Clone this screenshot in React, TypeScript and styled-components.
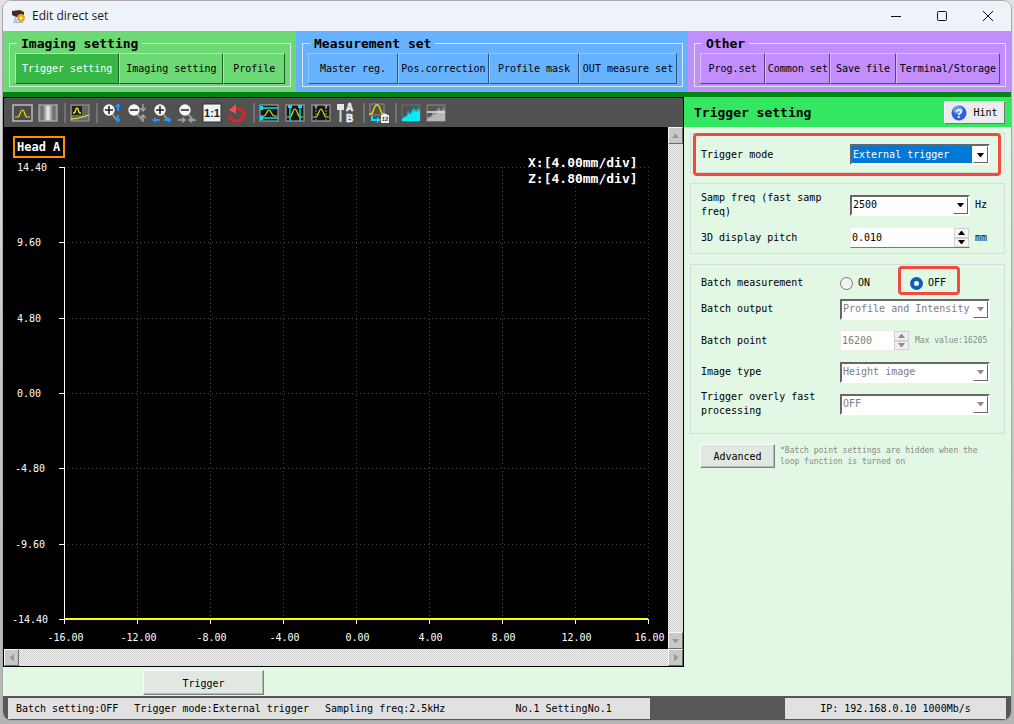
import React from "react";
import styled, { createGlobalStyle, css } from "styled-components";

const MONO = '"DejaVu Sans Mono", "Liberation Mono", monospace';

const GlobalStyle = createGlobalStyle`
  *, *::before, *::after { box-sizing: border-box; }
  body { margin: 0; background: #bdbdbd; font-family: ${MONO}; font-size: 10px; line-height: 14px; color: #000; }
  button, input, select { font: inherit; color: inherit; margin: 0; }
  h1, h2, p { margin: 0; }
`;

const Page = styled.div`
  min-height: 100vh;
  padding: 1px 3px 4px;
  display: flex;
  flex-direction: column;
  background: linear-gradient(#e2e2e4, #c9c9cb 50%, #b4b4b4);
`;

const Window = styled.div`
  flex: 1;
  display: flex;
  flex-direction: column;
  border-radius: 8px;
  overflow: hidden;
  background: #e2f7e4;
  box-shadow: 0 0 0 1px #a9a9ab;
`;

/* ---------- title bar ---------- */
const TitleBar = styled.header`
  display: flex;
  align-items: center;
  height: 30px;
  padding-left: 8px;
  gap: 6px;
  background: #eef3fa;
`;
const WindowTitle = styled.h1`
  flex: 1;
  font: 400 12px/16px "Open Sans", "Noto Sans", sans-serif;
  color: #1a1a1a;
`;
const CaptionButtons = styled.div`
  display: flex;
`;
const CaptionButton = styled.button`
  width: 46px;
  height: 30px;
  padding: 0;
  border: 0;
  background: none;
  display: grid;
  place-items: center;
`;

/* ---------- ribbon ---------- */
type Tone = "green" | "blue" | "purple";
const tones = {
  green: { bg: "#6cd975", light: "#a0f0a5", dark: "#1f5c27" },
  blue: { bg: "#66b2ff", light: "#92c9ff", dark: "#30557d" },
  purple: { bg: "#c28dfd", light: "#dab7ff", dark: "#5d437a" },
};
const Ribbon = styled.nav`
  display: grid;
  grid-template-columns: 293fr 392fr 323fr;
  border-bottom: 5px solid #048314;
`;
const RibbonSection = styled.div<{ $tone: Tone }>`
  padding: 5px 5px 5px 6px;
  background: ${(p) => tones[p.$tone].bg};
`;
const RibbonGroup = styled.fieldset`
  margin: 0;
  min-width: 0;
  padding: 2px 5px;
  border: 1px solid #d9e4ec;
`;
const RibbonLegend = styled.legend`
  margin-left: 2px;
  padding: 0 4px;
  font-size: 13px;
  line-height: 15px;
  font-weight: 700;
`;
const RibbonButtons = styled.div<{ $cols: string }>`
  display: grid;
  grid-template-columns: ${(p) => p.$cols};
`;
const RibbonButton = styled.button<{ $tone: Tone; $active?: boolean }>`
  height: 31px;
  padding: 1px 0 0;
  white-space: nowrap;
  background: ${(p) => (p.$active ? "#36b746" : "transparent")};
  color: ${(p) => (p.$active ? "#fff" : "#000")};
  border: 1px solid;
  border-color: ${(p) => {
    const t = tones[p.$tone];
    return `${t.light} ${t.dark} ${t.dark} ${t.light}`;
  }};
`;

/* ---------- main area ---------- */
const Main = styled.main`
  flex: 1;
  display: grid;
  grid-template-columns: minmax(0, 1fr) 327px;
`;
const LeftColumn = styled.section`
  display: flex;
  flex-direction: column;
`;
const PlotPanel = styled.div`
  border: 1px solid #000;
  background: #000;
`;
const Toolbar = styled.div`
  display: flex;
  align-items: center;
  height: 29px;
  padding-left: 4px;
  background: #515151;
`;
const ToolGroup = styled.div<{ $gap: number }>`
  display: flex;
  gap: ${(p) => p.$gap}px;
  padding: 0 6px 0 4px;
  border-right: 2px solid #727272;
  &:last-child { border-right: 0; }
`;
const ToolButton = styled.button`
  width: 20px;
  height: 20px;
  padding: 0;
  border: 0;
  background: none;
  svg { display: block; overflow: visible; }
`;
const PlotRow = styled.div`
  display: grid;
  grid-template-columns: minmax(0, 1fr) 15px;
`;
const PlotArea = styled.div`
  position: relative;
  svg { display: block; width: 100%; height: auto; }
`;
const HeadTag = styled.div`
  position: absolute;
  top: 9px;
  left: 9px;
  padding: 2px 3px 2px 2px;
  border: 2px solid #ff8c0a;
  color: #fff;
  font-size: 12px;
  line-height: 14px;
  font-weight: 700;
`;
const ScrollTrack = styled.div<{ $dir: "row" | "column" }>`
  display: flex;
  flex-direction: ${(p) => p.$dir};
  justify-content: space-between;
  background: repeating-conic-gradient(#cbcbcb 0 25%, #f4f4f4 0 50%) 0 0 / 2px 2px;
`;
const ScrollButton = styled.button`
  width: 15px;
  height: 17px;
  padding: 0;
  display: grid;
  place-items: center;
  background: #c8c8c8;
  border: 1px solid;
  border-color: #f6f6f6 #6c6c6c #6c6c6c #f6f6f6;
`;
const TriggerBar = styled.div`
  flex: 1;
  padding: 3px 0 1px 140px;
`;
const RaisedButton = styled.button<{ $width: number; $height: number }>`
  display: block;
  width: ${(p) => p.$width}px;
  height: ${(p) => p.$height}px;
  padding: 2px 0 0;
  flex: none;
  background: #e1e8e1;
  border: 1px solid;
  border-color: #fafffa #7c837c #7c837c #fafffa;
  box-shadow: inset -1px -1px #b4bbb4;
`;

/* ---------- settings ---------- */
const Settings = styled.aside`
  background: #e2f7e4;
`;
const SettingsHeader = styled.div`
  display: flex;
  align-items: center;
  justify-content: space-between;
  height: 30px;
  padding: 1px 6px 0 10px;
  background: #34e761;
`;
const SettingsTitle = styled.h2`
  font-size: 13px;
  line-height: 16px;
`;
const HintButton = styled.button`
  display: flex;
  align-items: center;
  justify-content: center;
  gap: 6px;
  width: 61px;
  height: 23px;
  padding: 0;
  background: #ececec;
  border: 1px solid;
  border-color: #fff #777 #777 #fff;
`;
const Groups = styled.div`
  display: flex;
  flex-direction: column;
  gap: 10px;
  padding: 6px 6px 10px;
`;
const GroupBox = styled.div<{ $top: number; $bottom: number; $gap?: number }>`
  position: relative;
  display: flex;
  flex-direction: column;
  gap: ${(p) => p.$gap ?? 0}px;
  padding: ${(p) => p.$top}px 14px ${(p) => p.$bottom}px 10px;
  border: 1px solid #d8dcda;
`;
const Marker = styled.div<{ $inset: string }>`
  position: absolute;
  inset: ${(p) => p.$inset};
  border: 3px solid #f04b3e;
  border-radius: 4px;
  pointer-events: none;
`;
const Row = styled.div<{ $label: number; $height: number }>`
  display: grid;
  grid-template-columns: ${(p) => p.$label}px minmax(0, 1fr);
  align-items: center;
  min-height: ${(p) => p.$height}px;
`;
const Controls = styled.div`
  display: flex;
  align-items: center;
  gap: 5px;
`;
const Combo = styled.div<{ $width: string }>`
  position: relative;
  width: ${(p) => p.$width};
  height: 21px;
  border: 2px solid;
  border-color: #666 #fff #fff #666;
  background: #fff;
`;
const ComboSelect = styled.select<{ $highlight?: boolean }>`
  appearance: none;
  display: block;
  width: 100%;
  height: 17px;
  padding: 0 16px 0 1px;
  border: 0;
  border-radius: 0;
  outline: 0;
  background: transparent;
  &:disabled { color: #7d7d7d; opacity: 1; }
  ${(p) =>
    p.$highlight &&
    css`
      color: #fff;
      background: linear-gradient(#0078d7, #0078d7) no-repeat 0 0 / calc(100% - 16px) 100%;
    `}
`;
const ComboArrow = styled.span<{ $off?: boolean }>`
  position: absolute;
  top: 0;
  right: 0;
  width: 15px;
  height: 17px;
  display: grid;
  place-items: center;
  border: 1px solid;
  border-color: #fff #666 #666 #fff;
  color: ${(p) => (p.$off ? "#8d8d8d" : "#000")};
  pointer-events: none;
`;
const Spin = styled.div<{ $width: number; $off?: boolean }>`
  display: flex;
  width: ${(p) => p.$width}px;
  height: 21px;
  border: 1px solid;
  border-color: #ededed #ededed ${(p) => (p.$off ? "#ededed" : "#7a7a7a")} #ededed;
  background: #fff;
`;
const SpinInput = styled.input`
  flex: 1;
  min-width: 0;
  padding: 0 1px;
  border: 0;
  outline: 0;
  background: transparent;
  appearance: textfield;
  &::-webkit-inner-spin-button { appearance: none; margin: 0; }
  &:disabled { color: #7d7d7d; }
`;
const SpinButtons = styled.div`
  display: grid;
  grid-template-rows: 1fr 1fr;
  width: 15px;
  background: #ececec;
`;
const SpinButton = styled.button`
  padding: 0;
  border: 1px solid #d2d2d2;
  background: #f6f6f6;
  display: grid;
  place-items: center;
  &:disabled { color: #8d8d8d; background: #efefef; }
`;
const RadioLabel = styled.label`
  position: relative;
  display: flex;
  align-items: center;
  gap: 5px;
  width: 65px;
`;
const Radio = styled.input`
  appearance: none;
  width: 13px;
  height: 13px;
  border: 1px solid #777;
  border-radius: 50%;
  background: #f3f3f3;
  &:checked { border: 4px solid #0a5fb6; background: #fff; }
`;
const SmallText = styled.span`
  max-width: 210px;
  font-size: 8px;
  line-height: 11px;
  color: #868a86;
`;
const LimitText = styled(SmallText)`
  white-space: nowrap;
`;
const AdvancedRow = styled.div`
  display: flex;
  align-items: center;
  gap: 5px;
  padding-left: 10px;
`;

/* ---------- status bar ---------- */
const StatusBar = styled.footer`
  display: grid;
  grid-template-columns: 642fr 135fr 221fr;
  height: 24px;
  padding: 2px 5px 1px;
  background: #575757;
`;
const StatusCell = styled.div<{ $last?: boolean }>`
  display: flex;
  align-items: center;
  gap: 16px;
  padding: 1px 0 0 8px;
  white-space: pre;
  background: #e1e1e1;
  ${(p) => p.$last && "grid-column: 3; justify-content: center; padding: 1px 0 0;"}
`;
const ProgramName = styled.span`
  margin-left: 54px;
`;

/* ---------- icons ---------- */
const Triangle = ({ d, w = 7, h = 4, fill = "currentColor" }: { d: string; w?: number; h?: number; fill?: string }) => (
  <svg width={w} height={h} viewBox={`0 0 ${w} ${h}`}>
    <path d={d} fill={fill} />
  </svg>
);
const DOWN = "M0 0h7L4 4H3z";
const UP = "M0 4h7L4 0H3z";

const Icon = ({ children }: { children: React.ReactNode }) => (
  <svg width="20" height="20" viewBox="0 0 20 20" fill="none">
    {children}
  </svg>
);
const Frame = () => <rect x="1" y="2" width="18" height="16" fill="#161616" stroke="#9c9c9c" strokeWidth="1.2" />;
const Lens = ({ x, plus }: { x: number; plus?: boolean }) => (
  <>
    <path d={`M${x + 3} 11l6 7`} stroke="#8e8e8e" strokeWidth="2" />
    <circle cx={x} cy="7" r="5.700" fill="#f7f7f7" />
    <path d={`M${x - 4} 7h8${plus ? `M${x} 3v8` : ""}`} stroke="#222" strokeWidth="1.6" />
  </>
);
const Bars = ({ color }: { color: string }) => (
  <path
    d="M1 18V15L2 16L3 13L4 15L5 12L6 14L7 7L8 12L9 9L10 12L11 5L12 10L13 3L14 9L15 6L16 10L17 3L18 9L19 6V18z"
    fill={color}
  />
);

const icons: Record<string, React.ReactNode> = {
  "Profile view": (
    <Icon>
      <rect x="1" y="2" width="19" height="16" fill="#4a4a4a" stroke="#b4b4b4" strokeWidth="1.6" />
      <path d="M3 14h3c2 0 2-7 4.500-7s2 7 4.500 7h3" stroke="#e8e000" strokeWidth="1.2" />
    </Icon>
  ),
  "Intensity view": (
    <Icon>
      <defs>
        <linearGradient id="grey">
          <stop stopColor="#8c8c8c" />
          <stop offset=".2" stopColor="#6a6a6a" />
          <stop offset=".5" stopColor="#f0f0f0" />
          <stop offset=".8" stopColor="#6a6a6a" />
          <stop offset="1" stopColor="#8c8c8c" />
        </linearGradient>
      </defs>
      <rect x="1" y="2" width="18" height="16" fill="url(#grey)" stroke="#a5a5a5" strokeWidth="1.4" />
    </Icon>
  ),
  "Combined view": (
    <Icon>
      <rect x="1" y="2" width="18" height="16" fill="#666" stroke="#9a9a9a" />
      <rect x="2" y="3" width="10" height="9" fill="#222" />
      <path d="M3 10h1c2 0 1-5 3-5s1 5 3 5h1M1 16c6 0 9-1 18-4" stroke="#f2ea00" strokeWidth="1.3" />
    </Icon>
  ),
  "Zoom in vertically": (
    <Icon>
      <Lens x={7} plus />
      <path d="M16 4v4M16 12v5" stroke="#1e96ff" strokeWidth="2" />
      <path d="M16 0l3 4h-6zM16 20l3-4h-6z" fill="#1e96ff" />
    </Icon>
  ),
  "Zoom out vertically": (
    <Icon>
      <Lens x={7} />
      <path d="M16 1v6M16 12v7M13.500 5l2.500 3 2.500-3M13.500 15l2.500-3 2.500 3" stroke="#a5a5a5" strokeWidth="1.400" />
    </Icon>
  ),
  "Zoom in horizontally": (
    <Icon>
      <Lens x={8} plus />
      <path d="M3 17h5M12 17h5" stroke="#1e96ff" strokeWidth="2" />
      <path d="M0 17l4-3v6zM20 17l-4-3v6z" fill="#1e96ff" />
    </Icon>
  ),
  "Zoom out horizontally": (
    <Icon>
      <Lens x={8} />
      <path d="M1 17h7M12 17h7M5 14.500l3 2.500-3 2.500M15 14.500l-3 2.500 3 2.500" stroke="#a5a5a5" strokeWidth="1.400" />
    </Icon>
  ),
  "Actual size": (
    <Icon>
      <rect x="1" y="1" width="18" height="18" fill="#eef3f9" stroke="#333" />
      <text x="10" y="14" textAnchor="middle" fontFamily="Liberation Sans, sans-serif" fontWeight="700" fontSize="11" fill="#222">
        1:1
      </text>
    </Icon>
  ),
  Reset: (
    <Icon>
      <path d="M9 6c5-1 8 2 8 5.500S14 18 10 18s-7-2-7.500-6" stroke="#dc2424" strokeWidth="3" />
      <path d="M9 1v10L2 7z" fill="#f25050" />
    </Icon>
  ),
  "Height range": (
    <Icon>
      <Frame />
      <path d="M2 13h3c2 0 3-6 5-6s3 6 5 6h3" stroke="#e8e000" strokeWidth="1.2" />
      <path d="M1 5h18M1 15h18" stroke="#00e5f5" strokeWidth="1.4" />
      <path d="M1 3h3v4H1zM1 13h3v4H1z" fill="#00e5f5" />
    </Icon>
  ),
  "Width range": (
    <Icon>
      <Frame />
      <path d="M2 14h3c2 0 3-8 5-8s3 8 5 8h3" stroke="#e8e000" strokeWidth="1.2" />
      <path d="M5 2v16M15 2v16" stroke="#00e5f5" strokeWidth="1.4" />
      <path d="M3 2h4v3H3zM13 2h4v3h-4z" fill="#00e5f5" />
    </Icon>
  ),
  "Mask range": (
    <Icon>
      <Frame />
      <path d="M2 14h3c2 0 3-8 5-8s3 8 5 8h3" stroke="#e8e000" strokeWidth="1.2" />
      <path d="M5 4v14M15 4v14" stroke="#999" strokeDasharray="2 1" />
      <path d="M3 2h4L5 6zM13 2h4l-2 4z" fill="#999" />
    </Icon>
  ),
  "Head A and B": (
    <Icon>
      <path d="M0 1h7v6H0z" fill="#e6e6e6" />
      <path d="M3.500 7v12" stroke="#d8d8d8" strokeWidth="2" />
      <g fontFamily="Liberation Sans, sans-serif" fontWeight="700" fontSize="10" fill="#f2f2f2" stroke="#f2f2f2" strokeWidth=".4">
        <text x="9" y="8">A</text>
        <text x="9" y="19">B</text>
      </g>
    </Icon>
  ),
  "Output position": (
    <Icon>
      <rect x="1" y="1" width="14" height="11" stroke="#8e8e8e" />
      <path d="M0 11h2c3 0 2-9 6-9s3 9 6 9h2" stroke="#f0d800" strokeWidth="1.4" />
      <path d="M3 13v4h6" stroke="#00e0ff" strokeWidth="2" />
      <path d="M8 14l4 3-4 3z" fill="#00e0ff" />
      <path d="M12 12h2v-1h4v1h2v8h-8z" fill="#f2f2f2" />
      <text x="16" y="18" textAnchor="middle" fontFamily="Liberation Sans, sans-serif" fontWeight="700" fontSize="6" fill="#333">
        12
      </text>
    </Icon>
  ),
  Histogram: (
    <Icon>
      <rect x="1" y="2" width="18" height="16" stroke="#707070" />
      <Bars color="#00f0ff" />
    </Icon>
  ),
  "Histogram level": (
    <Icon>
      <rect x="1" y="2" width="18" height="16" fill="#565656" stroke="#8a8a8a" />
      <Bars color="#b8b8b8" />
      <path d="M1 9h18" stroke="#e2e2e2" strokeWidth="1.400" />
    </Icon>
  ),
};

const toolGroups: { gap: number; items: string[] }[] = [
  { gap: 6, items: ["Profile view", "Intensity view"] },
  { gap: 6, items: ["Combined view"] },
  {
    gap: 5,
    items: ["Zoom in vertically", "Zoom out vertically", "Zoom in horizontally", "Zoom out horizontally", "Actual size", "Reset"],
  },
  { gap: 6, items: ["Height range", "Width range", "Mask range", "Head A and B"] },
  { gap: 6, items: ["Output position"] },
  { gap: 5, items: ["Histogram", "Histogram level"] },
];

const ribbon: { tone: Tone; title: string; cols: string; items: string[] }[] = [
  { tone: "green", title: "Imaging setting", cols: "105fr 105fr 62fr", items: ["Trigger setting", "Imaging setting", "Profile"] },
  {
    tone: "blue",
    title: "Measurement set",
    cols: "90fr 91fr 90fr 98fr",
    items: ["Master reg.", "Pos.correction", "Profile mask", "OUT measure set"],
  },
  {
    tone: "purple",
    title: "Other",
    cols: "65fr 65fr 65fr 104fr",
    items: ["Prog.set", "Common set", "Save file", "Terminal/Storage"],
  },
];

/* ---------- chart ---------- */
const yTicks = ["14.40", "9.60", "4.80", "0.00", "-4.80", "-9.60", "-14.40"];
const xTicks = ["-16.00", "-12.00", "-8.00", "-4.00", "0.00", "4.00", "8.00", "12.00", "16.00"];
const yPos = (i: number) => Math.round(40 + (i * 452) / 6) + 0.5;
const xPos = (i: number) => 60 + i * 73 + 0.5;
const yLabelX = (t: string) => (t.length > 5 ? 8 : t.startsWith("-") ? 11 : 13);

const Chart = () => (
  <svg viewBox="0 0 664 522" role="img" aria-label="Profile chart" fontFamily={MONO} fontSize="10" fill="#fff">
    <g stroke="#484848" strokeDasharray="1 3">
      {yTicks.slice(0, -1).map((t, i) => (
        <path key={t} d={`M60 ${yPos(i)}H644`} />
      ))}
      {xTicks.slice(1).map((t, i) => (
        <path key={t} d={`M${xPos(i + 1)} 40V492`} />
      ))}
    </g>
    <g stroke="#fff">
      <path d="M60.500 40V497M55 492.500H645" />
      {yTicks.map((t, i) => (
        <path key={t} d={`M55 ${yPos(i)}h5`} />
      ))}
      {xTicks.map((t, i) => (
        <path key={t} d={`M${xPos(i)} 492v5`} />
      ))}
    </g>
    <path d="M61 492H644" stroke="#ffff00" strokeWidth="2" />
    {yTicks.map((t, i) => (
      <text key={t} x={yLabelX(t)} y={yPos(i) + 3.5}>
        {t}
      </text>
    ))}
    {xTicks.map((t, i) => (
      <text key={t} x={xPos(i) + 1} y="514" textAnchor="middle">
        {t}
      </text>
    ))}
    <g fontSize="13" fontWeight="700">
      <text x="524" y="40">X:[4.00mm/div]</text>
      <text x="524" y="56">Z:[4.80mm/div]</text>
    </g>
  </svg>
);

type ComboProps = { id: string; width: string; value: string; disabled?: boolean; highlight?: boolean };
const ComboBox = ({ id, width, value, disabled, highlight }: ComboProps) => (
  <Combo $width={width}>
    <ComboSelect id={id} disabled={disabled} $highlight={highlight} defaultValue={value}>
      <option>{value}</option>
    </ComboSelect>
    <ComboArrow $off={disabled}>
      <Triangle d={DOWN} />
    </ComboArrow>
  </Combo>
);

type SpinProps = { id: string; width: number; value: string; step: string; disabled?: boolean };
const SpinBox = ({ id, width, value, step, disabled }: SpinProps) => (
  <Spin $width={width} $off={disabled}>
    <SpinInput id={id} type="number" step={step} defaultValue={value} disabled={disabled} />
    <SpinButtons>
      <SpinButton type="button" aria-label="Increase" disabled={disabled}>
        <Triangle d={UP} />
      </SpinButton>
      <SpinButton type="button" aria-label="Decrease" disabled={disabled}>
        <Triangle d={DOWN} />
      </SpinButton>
    </SpinButtons>
  </Spin>
);

export default function App() {
  return (
    <Page>
      <GlobalStyle />
      <Window>
        <TitleBar>
          <svg width="15" height="15" viewBox="0 0 15 15">
            <path d="M1 2l8-1 4 2v5H5L1 6z" fill="#4c2a2a" />
            <path d="M4 7L2 14h5z" fill="#9fc9ee" />
            <circle cx="10" cy="9" r="4" fill="#e9a91c" />
            <circle cx="10" cy="9" r="1.500" fill="#fff3c4" />
            <path d="M4 13.500h8" stroke="#a3b5c4" />
          </svg>
          <WindowTitle>Edit direct set</WindowTitle>
          <CaptionButtons>
            <CaptionButton type="button" aria-label="Minimize">
              <svg width="10" height="10" stroke="#111">
                <path d="M0 5.500h10" />
              </svg>
            </CaptionButton>
            <CaptionButton type="button" aria-label="Maximize">
              <svg width="10" height="10" stroke="#111" fill="none">
                <rect x=".5" y=".5" width="9" height="9" rx="1" />
              </svg>
            </CaptionButton>
            <CaptionButton type="button" aria-label="Close">
              <svg width="10" height="10" stroke="#111">
                <path d="M0 0l10 10M10 0L0 10" />
              </svg>
            </CaptionButton>
          </CaptionButtons>
        </TitleBar>

        <Ribbon>
          {ribbon.map((g) => (
            <RibbonSection key={g.title} $tone={g.tone}>
              <RibbonGroup>
                <RibbonLegend>{g.title}</RibbonLegend>
                <RibbonButtons $cols={g.cols}>
                  {g.items.map((t) => (
                    <RibbonButton key={t} type="button" $tone={g.tone} $active={t === "Trigger setting"}>
                      {t}
                    </RibbonButton>
                  ))}
                </RibbonButtons>
              </RibbonGroup>
            </RibbonSection>
          ))}
        </Ribbon>

        <Main>
          <LeftColumn>
            <PlotPanel>
              <Toolbar role="toolbar">
                {toolGroups.map((g) => (
                  <ToolGroup key={g.items[0]} $gap={g.gap}>
                    {g.items.map((name) => (
                      <ToolButton key={name} type="button" aria-label={name}>
                        {icons[name]}
                      </ToolButton>
                    ))}
                  </ToolGroup>
                ))}
              </Toolbar>
              <PlotRow>
                <PlotArea>
                  <Chart />
                  <HeadTag>Head A</HeadTag>
                </PlotArea>
                <ScrollTrack $dir="column">
                  <ScrollButton type="button" aria-label="Scroll up">
                    <Triangle d={UP} fill="#999" />
                  </ScrollButton>
                  <ScrollButton type="button" aria-label="Scroll down">
                    <Triangle d={DOWN} fill="#999" />
                  </ScrollButton>
                </ScrollTrack>
              </PlotRow>
              <ScrollTrack $dir="row">
                <ScrollButton type="button" aria-label="Scroll left">
                  <Triangle d="M4 0v7L0 4V3z" w={4} h={7} fill="#999" />
                </ScrollButton>
                <ScrollButton type="button" aria-label="Scroll right">
                  <Triangle d="M0 0v7l4-3V3z" w={4} h={7} fill="#999" />
                </ScrollButton>
              </ScrollTrack>
            </PlotPanel>
            <TriggerBar>
              <RaisedButton type="button" $width={121} $height={25}>
                Trigger
              </RaisedButton>
            </TriggerBar>
          </LeftColumn>

          <Settings>
            <SettingsHeader>
              <SettingsTitle>Trigger setting</SettingsTitle>
              <HintButton type="button">
                <svg width="16" height="16" viewBox="0 0 16 16">
                  <circle cx="8" cy="8" r="7.500" fill="#2c62d6" />
                  <ellipse cx="7" cy="5" rx="5" ry="4" fill="#6f9cf0" />
                  <text x="8" y="12.500" textAnchor="middle" fontFamily="Liberation Sans, sans-serif" fontWeight="700" fontSize="12" fill="#fff">
                    ?
                  </text>
                </svg>
                Hint
              </HintButton>
            </SettingsHeader>
            <Groups>
              <GroupBox $top={7} $bottom={4}>
                <Row $label={149} $height={27}>
                  <label htmlFor="mode">Trigger mode</label>
                  <ComboBox id="mode" width="140px" value="External trigger" highlight />
                </Row>
                <Marker $inset="-1px 3px -4px 2px" />
              </GroupBox>

              <GroupBox $top={7} $bottom={1} $gap={4}>
                <Row $label={149} $height={28}>
                  <label htmlFor="freq">Samp freq (fast samp freq)</label>
                  <Controls>
                    <ComboBox id="freq" width="120px" value="2500" />
                    Hz
                  </Controls>
                </Row>
                <Row $label={149} $height={29}>
                  <label htmlFor="pitch">3D display pitch</label>
                  <Controls>
                    <SpinBox id="pitch" width={120} value="0.010" step="0.001" />
                    mm
                  </Controls>
                </Row>
              </GroupBox>

              <GroupBox $top={8} $bottom={13}>
                <Row $label={139} $height={20}>
                  <span id="batch">Batch measurement</span>
                  <Controls role="radiogroup" aria-labelledby="batch">
                    <RadioLabel>
                      <Radio type="radio" name="batch" />
                      ON
                    </RadioLabel>
                    <RadioLabel>
                      <Radio type="radio" name="batch" defaultChecked />
                      OFF
                      <Marker $inset="-10px 15px -5px -12px" />
                    </RadioLabel>
                  </Controls>
                </Row>
                <Row $label={139} $height={32}>
                  <label htmlFor="output">Batch output</label>
                  <ComboBox id="output" width="150px" value="Profile and Intensity" disabled />
                </Row>
                <Row $label={139} $height={31}>
                  <label htmlFor="point">Batch point</label>
                  <Controls>
                    <SpinBox id="point" width={70} value="16200" step="1" disabled />
                    <LimitText>Max value:16205</LimitText>
                  </Controls>
                </Row>
                <Row $label={139} $height={32}>
                  <label htmlFor="type">Image type</label>
                  <ComboBox id="type" width="150px" value="Height image" disabled />
                </Row>
                <Row $label={139} $height={32}>
                  <label htmlFor="fast">Trigger overly fast processing</label>
                  <ComboBox id="fast" width="150px" value="OFF" disabled />
                </Row>
              </GroupBox>

              <AdvancedRow>
                <RaisedButton type="button" $width={75} $height={24}>
                  Advanced
                </RaisedButton>
                <SmallText>*Batch point settings are hidden when the loop function is turned on</SmallText>
              </AdvancedRow>
            </Groups>
          </Settings>
        </Main>

        <StatusBar>
          <StatusCell>
            <span>Batch setting:OFF</span>
            <span>Trigger mode:External trigger</span>
            <span>Sampling freq:2.5kHz</span>
            <ProgramName>No.1 SettingNo.1</ProgramName>
          </StatusCell>
          <StatusCell $last>IP: 192.168.0.10 1000Mb/s</StatusCell>
        </StatusBar>
      </Window>
    </Page>
  );
}
